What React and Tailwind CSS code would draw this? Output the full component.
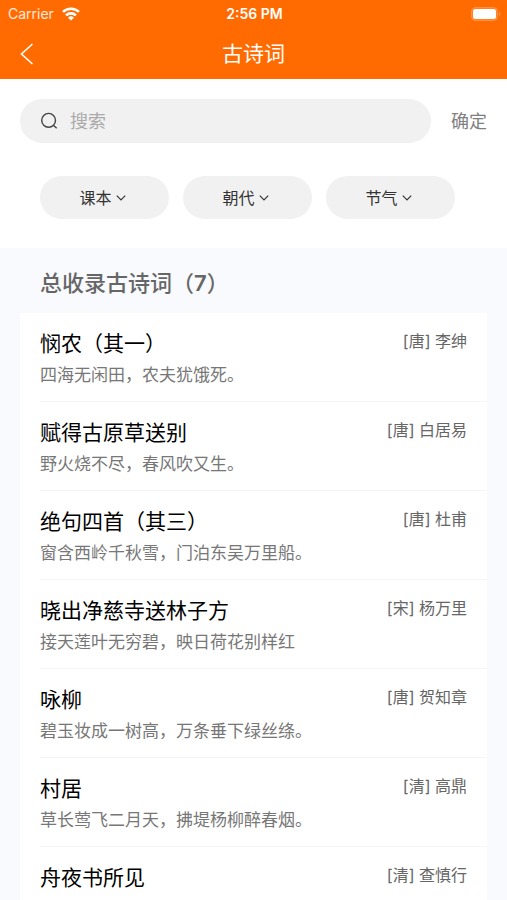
import React, { useState } from 'react';

const FILTERS = ['课本', '朝代', '节气'];

const POEMS = [
  { title: '悯农（其一）', line: '四海无闲田，农夫犹饿死。', dynasty: '唐', author: '李绅' },
  { title: '赋得古原草送别', line: '野火烧不尽，春风吹又生。', dynasty: '唐', author: '白居易' },
  { title: '绝句四首（其三）', line: '窗含西岭千秋雪，门泊东吴万里船。', dynasty: '唐', author: '杜甫' },
  { title: '晓出净慈寺送林子方', line: '接天莲叶无穷碧，映日荷花别样红', dynasty: '宋', author: '杨万里' },
  { title: '咏柳', line: '碧玉妆成一树高，万条垂下绿丝绦。', dynasty: '唐', author: '贺知章' },
  { title: '村居', line: '草长莺飞二月天，拂堤杨柳醉春烟。', dynasty: '清', author: '高鼎' },
  { title: '舟夜书所见', dynasty: '清', author: '查慎行' },
];

function WifiIcon() {
  return (
    <svg width="18" height="14" viewBox="0 0 18 14" fill="none" stroke="currentColor" strokeWidth="2.6" aria-hidden="true">
      <path d="M1 4.9a11.6 11.6 0 0 1 16 0" />
      <path d="M4 8.4a7.3 7.3 0 0 1 10 0" />
      <path d="M9 13.6 6 10.7a4.3 4.3 0 0 1 6 0z" fill="currentColor" stroke="none" />
    </svg>
  );
}

function BatteryIcon() {
  return (
    <svg width="30" height="14" viewBox="0 0 30 14" aria-hidden="true">
      <rect x="0.5" y="0.5" width="26" height="13" rx="4" fill="#fff" fillOpacity="0.15" stroke="#fff" strokeOpacity="0.2" />
      <rect x="2" y="2" width="23" height="10" rx="2.5" fill="#fff" />
      <path d="M28 4.8c1.6.6 1.6 3.8 0 4.4z" fill="#fff" fillOpacity="0.35" />
    </svg>
  );
}

function StatusBar() {
  return (
    <div className="grid h-7 grid-cols-[1fr_auto_1fr] items-center pr-1.5 pl-2 text-sm">
      <div className="flex items-center gap-2 text-white/85">
        Carrier
        <span className="text-white"><WifiIcon /></span>
      </div>
      <div className="text-center font-semibold">2:56 PM</div>
      <div className="flex justify-end"><BatteryIcon /></div>
    </div>
  );
}

function FilterButton({ label }) {
  return (
    <button
      type="button"
      className="flex h-[43px] flex-1 items-center justify-center gap-1 rounded-full bg-[#f1f1f1] pr-1 text-base text-[#333333]"
    >
      {label}
      <svg width="10" height="6" viewBox="0 0 10 6" fill="none" stroke="currentColor" strokeWidth="1.2" aria-hidden="true">
        <path d="M.8.7 5 4.9 9.2.7" />
      </svg>
    </button>
  );
}

function PoemRow({ poem }) {
  return (
    <li className="flex min-h-[89px] items-start justify-between border-b border-[#f5f5f5] pt-4 pr-5 pb-2.5">
      <div>
        <h3 className="text-[21px] leading-[30px] text-black">{poem.title}</h3>
        {poem.line && <p className="text-[17px] leading-8 text-[#777777]">{poem.line}</p>}
      </div>
      <span className="text-base leading-6 text-[#666666]">
        [{poem.dynasty}] {poem.author}
      </span>
    </li>
  );
}

export default function App() {
  const [keyword, setKeyword] = useState('');

  return (
    <div className="flex h-screen flex-col overflow-hidden bg-[#f8fafe] font-['Inter','Noto_Sans_CJK_SC',sans-serif]" lang="zh-CN">
      {/* Header */}
      <header className="shrink-0 bg-[#ff6b00] text-white">
        <StatusBar />
        <div className="grid h-[51px] grid-cols-[54px_1fr_54px] items-center">
          <button type="button" aria-label="返回" className="flex h-full items-center justify-center">
            <svg width="14" height="22" viewBox="0 0 14 22" fill="none" stroke="currentColor" strokeWidth="1.6">
              <path d="M12.5 1 1.5 11l11 10" />
            </svg>
          </button>
          <h1 className="text-center text-[21px] leading-[30px]">古诗词</h1>
        </div>
      </header>

      {/* Search and filters */}
      <section className="shrink-0 bg-white pt-5 pb-[29px]">
        <form className="flex items-center gap-5 px-5" onSubmit={(e) => e.preventDefault()}>
          <label className="flex h-11 min-w-0 flex-1 items-center gap-3 rounded-full bg-[#f1f1f1] px-5">
            <svg width="18" height="18" viewBox="0 0 18 18" fill="none" stroke="#444" strokeWidth="1.4" className="shrink-0">
              <circle cx="8.6" cy="8.3" r="6.9" />
              <path d="m13.3 13.3 3.4 3" />
            </svg>
            <input
              type="text"
              value={keyword}
              onChange={(e) => setKeyword(e.target.value)}
              placeholder="搜索"
              aria-label="搜索"
              className="min-w-0 flex-1 bg-transparent pt-0.5 text-lg text-[#333333] outline-none placeholder:text-[#aaaaaa]"
            />
          </label>
          <button type="submit" className="pt-0.5 text-lg text-[#808080]">确定</button>
        </form>
        <div className="flex gap-3.5 pt-[33px] pr-[52px] pl-10">
          {FILTERS.map((label) => (
            <FilterButton key={label} label={label} />
          ))}
        </div>
      </section>

      {/* Poem list */}
      <main className="min-h-0 flex-1 overflow-y-auto px-5 [scrollbar-width:none]">
        <h2 className="px-5 pt-[19px] pb-3.5 text-[22px] leading-8 font-medium text-[#666666]">
          总收录古诗词（<span className="font-semibold">{POEMS.length}</span>）
        </h2>
        <ul className="bg-white pl-5">
          {POEMS.map((poem) => (
            <PoemRow key={poem.title} poem={poem} />
          ))}
        </ul>
      </main>
    </div>
  );
}
